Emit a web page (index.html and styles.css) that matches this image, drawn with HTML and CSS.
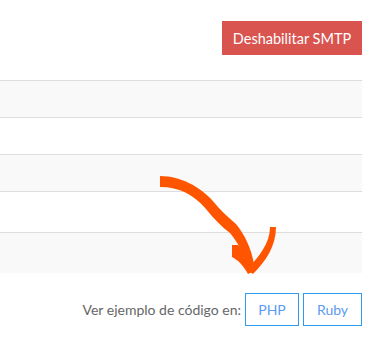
FILE: index.html
```html
<!DOCTYPE html>
<html lang="es">
<head>
<meta charset="utf-8">
<link rel="stylesheet" href="styles.css">
</head>
<body>
<div class="page">
  <div class="toolbar">
    <button class="btn-danger">Deshabilitar SMTP</button>
  </div>
  <div class="table">
    <div class="row stripe"></div>
    <div class="row"></div>
    <div class="row stripe"></div>
    <div class="row tall"></div>
    <div class="row stripe tall last"></div>
  </div>
  <div class="examples">
    <span class="label">Ver ejemplo de código en:</span>
    <button class="btn-outline php">PHP</button>
    <button class="btn-outline ruby">Ruby</button>
  </div>
  <svg class="arrow" width="130" height="110" viewBox="150 170 130 110" xmlns="http://www.w3.org/2000/svg">
    <path fill="#ff5500" d="M160,176 C181,176 200,187 212,200 C220,210 228,217 236,224 C245,235 251,248 254,264 L252,273 L248,272 C246,258 238,242 230,233 C222,227 214,219 206,209 C194,195 180,187 160,187 Z"/>
    <path fill="#ff5500" d="M270,227 L276,227 C276,246 266,261 253,274 L247,269 C259,257 270,243 270,227 Z"/>
    <path fill="#ff5500" d="M232,245 L238,245 C244,251 250,260 254,271 L248,274 C243,265 238,260 232,257 Z"/>
  </svg>
</div>
</body>
</html>
```
FILE: styles.css
```css
html, body {
  margin: 0;
  padding: 0;
  background: #ffffff;
}
.page {
  position: relative;
  width: 372px;
  height: 349px;
  padding-right: 10px;
  box-sizing: border-box;
  font-family: Lato, "Open Sans", sans-serif;
}
.toolbar {
  display: flex;
  justify-content: flex-end;
  align-items: flex-start;
  padding-top: 21px;
  height: 80px;
  box-sizing: border-box;
}
.btn-danger {
  width: 140px;
  height: 34px;
  border: none;
  border-radius: 0;
  background: #d9534f;
  color: #ffffff;
  font-family: Lato, "Open Sans", sans-serif;
  font-size: 14.5px;
  padding: 0;
}
.table {
  display: flex;
  flex-direction: column;
}
.row {
  height: 37px;
  border-top: 1px solid #dddddd;
  box-sizing: border-box;
}
.row.tall {
  height: 41px;
}
.stripe {
  background: #f9f9f9;
}
.examples {
  display: flex;
  justify-content: flex-end;
  align-items: center;
  gap: 4px;
  margin-top: 20px;
}
.label {
  color: #666666;
  font-size: 14px;
}
.btn-outline {
  height: 33px;
  border: 1.5px solid #2e9bf0;
  background: #ffffff;
  color: #5b9bf0;
  font-family: Lato, "Open Sans", sans-serif;
  font-size: 14px;
  padding: 0;
  border-radius: 0;
}
.php {
  width: 54px;
}
.ruby {
  width: 59px;
}
.arrow {
  position: absolute;
  left: 150px;
  top: 170px;
}
```
